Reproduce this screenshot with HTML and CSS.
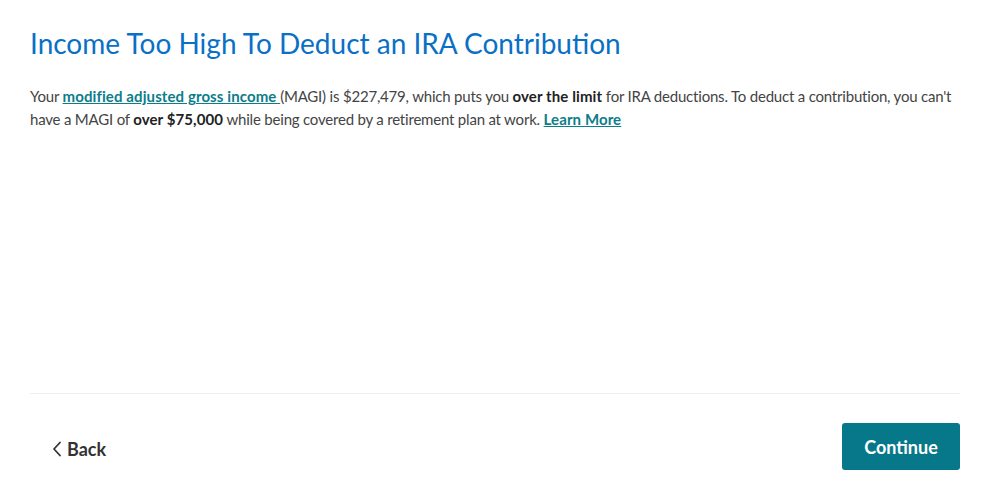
FILE: index.html
```html
<!DOCTYPE html>
<html lang="en">
<head>
    <meta charset="UTF-8">
    <title>Income Too High</title>
    <link rel="stylesheet" href="styles.css">
</head>
<body>
    <div class="page">
        <div class="content">
            <h1>Income Too High To Deduct an IRA Contribution</h1>
            <p class="intro">
                Your <a href="#">modified adjusted gross income </a>(MAGI) is $227,479, which puts you <b>over the limit</b> for IRA deductions. To deduct a contribution, you can't have a MAGI of <b>over $75,000</b> while being covered by a retirement plan at work. <a href="#">Learn More</a>
            </p>
        </div>
        <div class="footer">
            <button class="back">
                <svg width="10" height="16" viewBox="0 0 10 16"><path d="M8 1.5 L2 8 L8 14.5" fill="none" stroke="#333" stroke-width="1.8" stroke-linecap="round" stroke-linejoin="round"/></svg>
                Back
            </button>
            <button class="continue">Continue</button>
        </div>
    </div>
</body>
</html>
```

FILE: styles.css
```css
body {
    margin: 0;
    font-family: Lato, "Noto Sans", sans-serif;
    background-color: #fff;
    color: #333;
}
.page {
    padding: 0 39px 0 30px;
    height: 495px;
    display: flex;
    flex-direction: column;
}
.content {
    flex: 1;
    border-bottom: 1px solid #eee;
}
h1 {
    margin: 25px 0 0 0;
    font-size: 28px;
    font-weight: 400;
    color: #0a70c6;
    line-height: 36px;
}
.intro {
    margin: 24px 0 0 0;
    font-size: 15px;
    line-height: 23px;
    letter-spacing: -0.2px;
    color: #444;
}
.intro a {
    color: #0c7d8a;
    font-weight: 700;
    letter-spacing: 0.1px;
    text-decoration: underline;
}
.intro b {
    color: #222;
    letter-spacing: 0.1px;
}
.footer {
    height: 101px;
    display: flex;
    justify-content: space-between;
    align-items: flex-start;
}
button {
    font-family: inherit;
    cursor: pointer;
    border: none;
}
.back {
    margin-top: 44px;
    margin-left: 22px;
    background: none;
    padding: 0;
    font-size: 18px;
    font-weight: 700;
    color: #333;
    display: flex;
    align-items: center;
    gap: 5px;
}
.continue {
    margin-top: 29px;
    width: 118px;
    height: 47px;
    background-color: #067889;
    color: white;
    font-size: 18px;
    font-weight: 700;
    border-radius: 3px;
}
```
